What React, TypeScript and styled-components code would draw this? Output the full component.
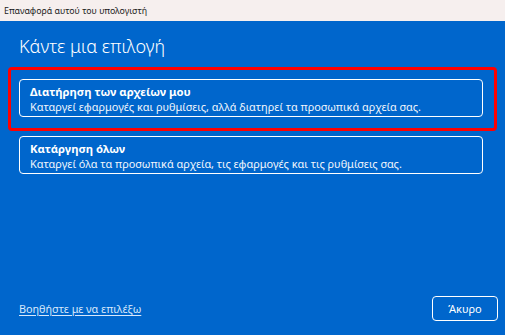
import styled, { createGlobalStyle } from 'styled-components';

const GlobalStyle = createGlobalStyle`
  html, body {
    margin: 0;
    padding: 0;
    height: 100%;
    overflow: hidden;
  }
  #root {
    height: 100%;
  }
  * {
    box-sizing: border-box;
  }
`;

const Window = styled.div`
  display: flex;
  flex-direction: column;
  height: 100vh;
  font-family: 'Noto Sans', 'Open Sans', sans-serif;
  background: #0066cc;
  color: #ffffff;
`;

const TitleBar = styled.div`
  height: 21px;
  flex-shrink: 0;
  display: flex;
  align-items: center;
  padding-left: 4px;
  background: #f6efee;
  color: #1b1b1b;
  font-size: 8.8px;
`;

const Body = styled.div`
  flex: 1;
  display: flex;
  flex-direction: column;
  padding: 13px 22px 14px 19px;
`;

const Heading = styled.h1`
  margin: 0 0 21px;
  font-size: 18px;
  font-weight: 300;
  line-height: 24px;
`;

const Options = styled.div`
  display: flex;
  flex-direction: column;
  gap: 19px;
`;

const Option = styled.button<{ $marked?: boolean }>`
  position: relative;
  display: flex;
  flex-direction: column;
  align-items: flex-start;
  gap: 1px;
  height: 38px;
  padding: 5px 10px 0;
  border: 1.5px solid #ffffff;
  border-radius: 4px;
  background: transparent;
  color: #ffffff;
  font-family: inherit;
  text-align: left;
  cursor: pointer;

  &::after {
    content: '';
    display: ${(p) => (p.$marked ? 'block' : 'none')};
    position: absolute;
    top: -13px;
    left: -12px;
    right: -15px;
    bottom: -15px;
    border: 3px solid #ff0000;
    border-radius: 4px;
    pointer-events: none;
  }
`;

const OptionTitle = styled.span`
  font-size: 11.3px;
  font-weight: 700;
  line-height: 14px;
`;

const OptionText = styled.span`
  font-size: 10.9px;
  line-height: 14px;
  color: #f2f6fc;
`;

const Footer = styled.div`
  margin-top: auto;
  display: flex;
  align-items: center;
  justify-content: space-between;
`;

const HelpLink = styled.a`
  font-size: 10.8px;
  color: #d8e8fb;
  text-decoration: underline;
  text-underline-offset: 2px;
  cursor: pointer;
`;

const CancelButton = styled.button`
  width: 66px;
  height: 25px;
  margin-right: -15px;
  border: 1.5px solid #ffffff;
  border-radius: 4px;
  background: transparent;
  color: #ffffff;
  font-family: inherit;
  font-size: 11px;
  cursor: pointer;
`;

export default function App() {
  return (
    <>
      <GlobalStyle />
      <Window>
        <TitleBar>Επαναφορά αυτού του υπολογιστή</TitleBar>
        <Body>
          <Heading>Κάντε μια επιλογή</Heading>
          <Options>
            <Option $marked>
              <OptionTitle>Διατήρηση των αρχείων μου</OptionTitle>
              <OptionText>Καταργεί εφαρμογές και ρυθμίσεις, αλλά διατηρεί τα προσωπικά αρχεία σας.</OptionText>
            </Option>
            <Option>
              <OptionTitle>Κατάργηση όλων</OptionTitle>
              <OptionText>Καταργεί όλα τα προσωπικά αρχεία, τις εφαρμογές και τις ρυθμίσεις σας.</OptionText>
            </Option>
          </Options>
          <Footer>
            <HelpLink>Βοηθήστε με να επιλέξω</HelpLink>
            <CancelButton>Άκυρο</CancelButton>
          </Footer>
        </Body>
      </Window>
    </>
  );
}
